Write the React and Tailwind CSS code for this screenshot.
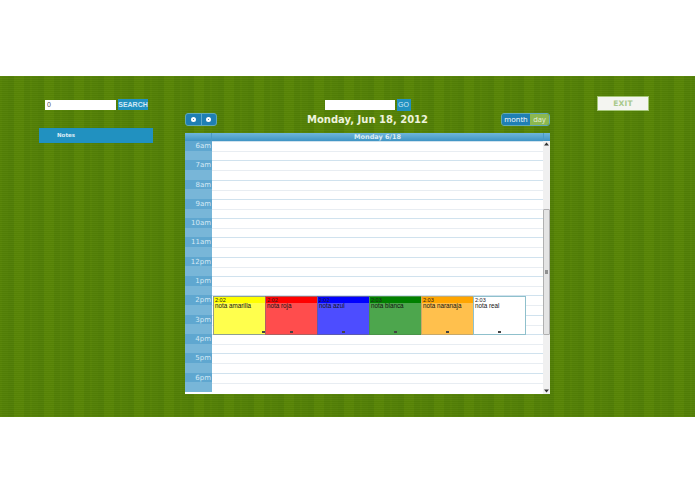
const hours = ["6am","7am","8am","9am","10am","11am","12pm","1pm","2pm","3pm","4pm","5pm","6pm"];

const events = [
  { left: "left-[1px]", w: "w-[53px]", time: "2:02", title: "nota amarilla", head: "bg-[#ffff00]", body: "bg-[#ffff4d]", border: "border-[#8fa08f]", mark: "left-[48px]" },
  { left: "left-[53px]", w: "w-[53px]", time: "2:02", title: "nota roja", head: "bg-[#ff0000]", body: "bg-[#ff4d4d]", border: "border-[#b06060]", mark: "left-[24px]" },
  { left: "left-[105px]", w: "w-[53px]", time: "2:02", title: "nota azul", head: "bg-[#0000ff]", body: "bg-[#4d4dff]", border: "border-[#5a5ab0]", mark: "left-[24px]" },
  { left: "left-[157px]", w: "w-[53px]", time: "2:03", title: "nota blanca", head: "bg-[#008000]", body: "bg-[#4da64d]", border: "border-[#4a944a]", mark: "left-[24px]" },
  { left: "left-[209px]", w: "w-[53px]", time: "2:03", title: "nota naranaja", head: "bg-[#ffa500]", body: "bg-[#ffc04d]", border: "border-[#c8a868]", mark: "left-[24px]" },
  { left: "left-[261px]", w: "w-[53px]", time: "2:03", title: "nota real", head: "bg-white", body: "bg-white", border: "border-[#8fc0cc]", mark: "left-[24px]" },
];

function Arrow({ up }) {
  return (
    <svg width="5" height="4" viewBox="0 0 5 4" className="mx-auto">
      <path d={up ? "M2.5 0.5 L5 3.5 L0 3.5 Z" : "M2.5 3.5 L5 0.5 L0 0.5 Z"} fill="#333" />
    </svg>
  );
}

export default function App() {
  return (
    <div className="h-[494px] w-[695px] overflow-hidden bg-white font-['DejaVu_Sans',sans-serif]">
      <div className="mt-[76px] flex h-[341px] bg-[#558206] bg-[repeating-linear-gradient(0deg,#ffffff06_0px,#ffffff06_1px,#00000006_1px,#00000006_2px),repeating-linear-gradient(90deg,#568306_0px,#568306_2px,#538006_2px,#538006_8px,#517e06_8px,#517e06_14px,#588506_14px,#588506_24px,#527f06_24px,#527f06_30px)] pl-[39px]">
        {/* left column */}
        <div className="w-[114px] pt-[23px]">
          <div className="ml-[6px] flex items-center gap-[2px]">
            <input readOnly value="0" className="h-[10px] w-[71px] bg-white px-[2px] font-['Liberation_Sans',sans-serif] text-[7px] leading-[10px] text-[#555] outline-none" />
            <div className="flex h-[11px] w-[30px] items-center justify-center bg-[#2191c0] pt-[1px] font-['Liberation_Sans',sans-serif] text-[7px] font-bold text-[#cfe8f5]">SEARCH</div>
          </div>
          <div className="mt-[18px] flex h-[15px] items-center bg-[#2191c0] pl-[18px] text-[5.5px] font-bold text-[#dcecf5]">Notes</div>
        </div>

        {/* center column */}
        <div className="ml-[32px] w-[365px] pt-[23px]">
          <div className="flex items-center justify-center gap-[2px]">
            <input readOnly className="h-[10px] w-[70px] bg-white outline-none" />
            <div className="flex h-[12px] w-[14px] items-center justify-center bg-[#2191c0] font-['Liberation_Sans',sans-serif] text-[7px] text-[#cfe8f5]">GO</div>
          </div>
          <div className="relative mt-[1px] flex h-[15px] items-center justify-between">
            <div className="flex h-[13px] w-[32px] rounded-[3px] border border-[#5fa8b8] bg-[#1f7fb4]">
              <div className="flex flex-1 items-center justify-center border-r border-[#5fa8cc]"><span className="h-[5px] w-[5px] rounded-full border-[2px] border-white bg-[#1f5f8f]" /></div>
              <div className="flex flex-1 items-center justify-center"><span className="h-[5px] w-[5px] rounded-full border-[2px] border-white bg-[#1f5f8f]" /></div>
            </div>
            <div className="absolute inset-x-0 text-center text-[10px] font-bold text-[#eef3dd]">Monday, Jun 18, 2012</div>
            <div className="flex h-[13px] w-[49px] overflow-hidden rounded-[3px] border border-[#5fa8b8] font-['Open_Sans',sans-serif] text-[7.5px] text-white">
              <div className="flex w-[28px] items-center justify-center bg-[#1f7fb4]">month</div>
              <div className="flex flex-1 items-center justify-center bg-[#8cb84f] text-[#e6f0d8]">day</div>
            </div>
          </div>

          {/* calendar */}
          <div className="mt-[6px] h-[261px] w-[365px] overflow-hidden bg-white">
            <div className="flex h-[8px] bg-[linear-gradient(#6fb6dc,#3f94c4)] text-[6.5px] font-bold leading-[8px] text-[#dcecf5]">
              <div className="w-[27px] border-r border-[#4a9ac6]" />
              <div className="flex-1 text-center">Monday 6/18</div>
              <div className="w-[7px] border-l border-[#4a9ac6]" />
            </div>
            <div className="flex h-[253px]">
              <div className="w-[27px] shrink-0">
                {hours.map((h) => (
                  <div key={h} className="h-[19.3px]">
                    <div className="h-[9.65px] bg-[#5fa7d0] pr-[1px] text-right font-['DejaVu_Sans',sans-serif] text-[7px] leading-[11px] text-[#d5e9f5]">{h}</div>
                    <div className="h-[9.65px] bg-[#78b6d8]" />
                  </div>
                ))}
              </div>
              <div className="relative flex-1">
                {hours.map((h) => (
                  <div key={h} className="h-[19.3px] border-t border-[#d0e2ee]">
                    <div className="mt-[9px] border-t border-[#e8edf2]" />
                  </div>
                ))}
                {events.map((e) => (
                  <div key={e.title} className={`absolute top-[155px] flex h-[39px] flex-col border font-['Liberation_Sans',sans-serif] ${e.border} ${e.left} ${e.w} ${e.body}`}>
                    <div className={`h-[6px] pl-[1px] text-[5.5px] leading-[6px] text-[#222] ${e.head}`}>{e.time}</div>
                    <div className="pl-[1px] text-[6.3px] leading-[6px] text-[#111]">{e.title}</div>
                    <div className={`absolute bottom-[1px] h-[2px] w-[3px] bg-[#444] ${e.mark}`} />
                  </div>
                ))}
              </div>
              <div className="flex w-[7px] shrink-0 flex-col bg-[#f0f0f0]">
                <div className="h-[6px] pt-[1px]"><Arrow up /></div>
                <div className="mt-[62px] flex h-[126px] items-center justify-center rounded-[1px] border border-[#b0b0b0] bg-[#e4e4e4]">
                  <div className="h-[4px] w-[3px] bg-[#909090]" />
                </div>
                <div className="mt-auto h-[6px] pt-[1px]"><Arrow /></div>
              </div>
            </div>
          </div>
        </div>

        {/* exit */}
        <div className="ml-[47px] pt-[20px]">
          <div className="flex h-[15px] w-[52px] items-center justify-center border border-[#a6c779] bg-[#f4f5f1] text-[7.5px] font-bold tracking-wide text-[#a9c98b]">EXIT</div>
        </div>
      </div>
    </div>
  );
}
